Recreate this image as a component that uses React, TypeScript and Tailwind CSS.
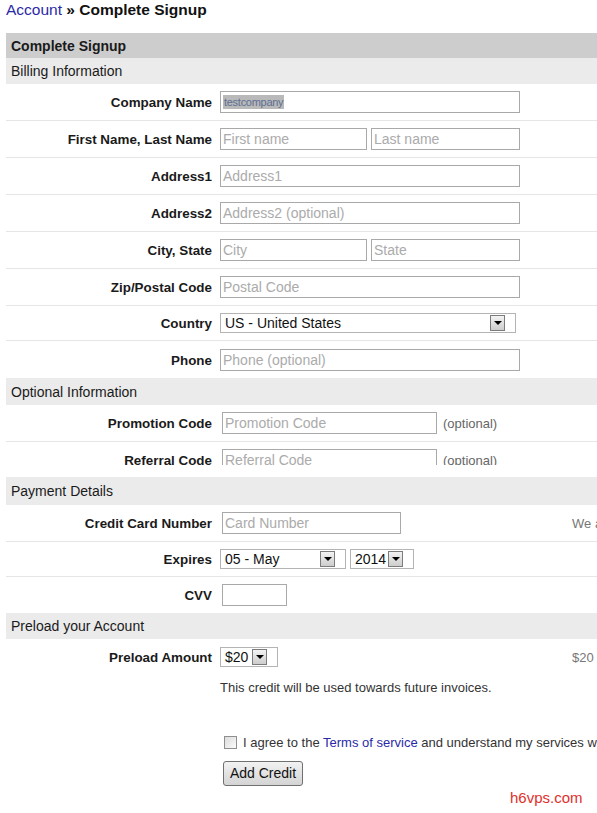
import React from 'react';

type RowProps = {
  label: string;
  children: React.ReactNode;
  h?: string;
  last?: boolean;
};

const Row = ({ label, children, h = 'h-[37px]', last = false }: RowProps) => (
  <div className={`flex items-center ${h} ${last ? '' : 'border-b border-[#e6e6e6]'}`}>
    <div className="w-[206px] shrink-0 pt-[3px] text-right text-[13.4px] font-bold text-[#1a1a1a]">{label}</div>
    {children}
  </div>
);

const Bar = ({ title, h = 'h-[26px]', dark = false }: { title: string; h?: string; dark?: boolean }) => (
  <div
    className={`flex items-center pl-[5px] pt-[1px] text-[14px] text-[#1a1a1a] ${h} ${
      dark ? 'bg-[#cdcdcd] font-bold' : 'bg-[#ebebeb]'
    }`}
  >
    {title}
  </div>
);

const Field = ({ placeholder, w, ml = 'ml-[8px]' }: { placeholder?: string; w: string; ml?: string }) => (
  <input
    placeholder={placeholder}
    className={`h-[22px] ${w} ${ml} border border-[#a9a9a9] bg-white px-[2px] text-[14px] text-[#111] outline-none placeholder:text-[#ababab]`}
  />
);

const Select = ({ value, w, ml = 'ml-[8px]' }: { value: string; w: string; ml?: string }) => (
  <div className={`flex h-[20px] items-center ${w} ${ml} border border-[#b4b4b4] bg-white pl-[4px] pr-[10px]`}>
    <span className="flex-1 whitespace-nowrap text-[14px] leading-none text-[#111]">{value}</span>
    <span className="flex h-[16px] w-[15px] shrink-0 items-center justify-center border border-[#7c7c7c] bg-linear-to-b from-[#f3f3f3] to-[#cdcdcd]">
      <span className="h-0 w-0 border-x-[4px] border-t-[4px] border-x-transparent border-t-black" />
    </span>
  </div>
);

const App = () => {
  return (
    <div className="relative h-[813px] w-[597px] overflow-hidden bg-white font-['Liberation_Sans',Arial,sans-serif]">
      <div className="w-[900px] pl-[6px]">
        {/* breadcrumb */}
        <div className="h-[33px] text-[15.5px] leading-[20px]">
          <span className="text-[#2a2aa8]">Account</span>
          <span className="font-bold text-[#111]"> » Complete Signup</span>
        </div>

        <Bar title="Complete Signup" h="h-[25px]" dark />
        <Bar title="Billing Information" />

        <Row label="Company Name">
          <div className="ml-[8px] flex h-[22px] w-[300px] items-center border border-[#a9a9a9] bg-white px-[2px]">
            <span className="bg-[#b9b9b9] px-[1px] text-[11px] leading-[14px] tracking-tight text-[#5d6f92]">testcompany</span>
          </div>
        </Row>
        <Row label="First Name, Last Name">
          <Field placeholder="First name" w="w-[147px]" />
          <Field placeholder="Last name" w="w-[149px]" ml="ml-[4px]" />
        </Row>
        <Row label="Address1">
          <Field placeholder="Address1" w="w-[300px]" />
        </Row>
        <Row label="Address2">
          <Field placeholder="Address2 (optional)" w="w-[300px]" />
        </Row>
        <Row label="City, State">
          <Field placeholder="City" w="w-[147px]" />
          <Field placeholder="State" w="w-[149px]" ml="ml-[4px]" />
        </Row>
        <Row label="Zip/Postal Code">
          <Field placeholder="Postal Code" w="w-[300px]" />
        </Row>
        <Row label="Country" h="h-[35px]">
          <Select value="US - United States" w="w-[296px]" />
        </Row>
        <Row label="Phone" last>
          <Field placeholder="Phone (optional)" w="w-[300px]" />
        </Row>

        <Bar title="Optional Information" h="h-[27px]" />
        <div className="h-[60px] overflow-hidden">
          <Row label="Promotion Code">
            <Field placeholder="Promotion Code" w="w-[215px]" ml="ml-[10px]" />
            <span className="ml-[6px] pt-[2px] text-[13px] text-[#666]">(optional)</span>
          </Row>
          <Row label="Referral Code">
            <Field placeholder="Referral Code" w="w-[215px]" ml="ml-[10px]" />
            <span className="ml-[6px] pt-[2px] text-[13px] text-[#666]">(optional)</span>
          </Row>
        </div>
        <div className="h-[12px]" />

        <Bar title="Payment Details" h="h-[28px]" />
        <Row label="Credit Card Number">
          <Field placeholder="Card Number" w="w-[179px]" ml="ml-[10px]" />
          <span className="ml-[171px] whitespace-nowrap pt-[2px] text-[13px] text-[#777]">We accept Visa, MasterCard, American Express and Discover</span>
        </Row>
        <Row label="Expires" h="h-[35px]">
          <Select value="05 - May" w="w-[126px]" />
          <Select value="2014" w="w-[64px]" ml="ml-[4px]" />
        </Row>
        <Row label="CVV" h="h-[36px]" last>
          <Field w="w-[65px]" ml="ml-[10px]" />
        </Row>

        <Bar title="Preload your Account" />
        <Row label="Preload Amount" h="h-[36px]" last>
          <Select value="$20" w="w-[58px]" />
          <span className="ml-[294px] whitespace-nowrap pt-[2px] text-[13px] text-[#777]">$20 will be added to your account balance</span>
        </Row>

        <div className="mt-[5px] pl-[214px] text-[13px] leading-[16px] text-[#333]">
          This credit will be used towards future invoices.
        </div>

        <div className="mt-[38px] flex h-[16px] items-center pl-[218px] text-[13px] text-[#333]">
          <span className="h-[13px] w-[13px] shrink-0 border border-[#8e8f8f] bg-linear-to-br from-[#dcdcdc] to-[#fbfbfb]" />
          <span className="ml-[6px] whitespace-nowrap pt-[1px]">
            I agree to the <span className="text-[#2a2aa8]">Terms of service</span> and understand my services will be provisioned immediately
          </span>
        </div>

        <div className="mt-[11px] pl-[217px]">
          <button className="h-[25px] w-[80px] rounded-[3px] border border-[#707070] bg-linear-to-b from-[#f2f2f2] to-[#d4d4d4] text-[14px] text-[#111]">
            Add Credit
          </button>
        </div>
      </div>

      <div className="absolute left-[510px] top-[787px] text-[15px] text-[#e0302c]">h6vps.com</div>
    </div>
  );
};

export default App;
